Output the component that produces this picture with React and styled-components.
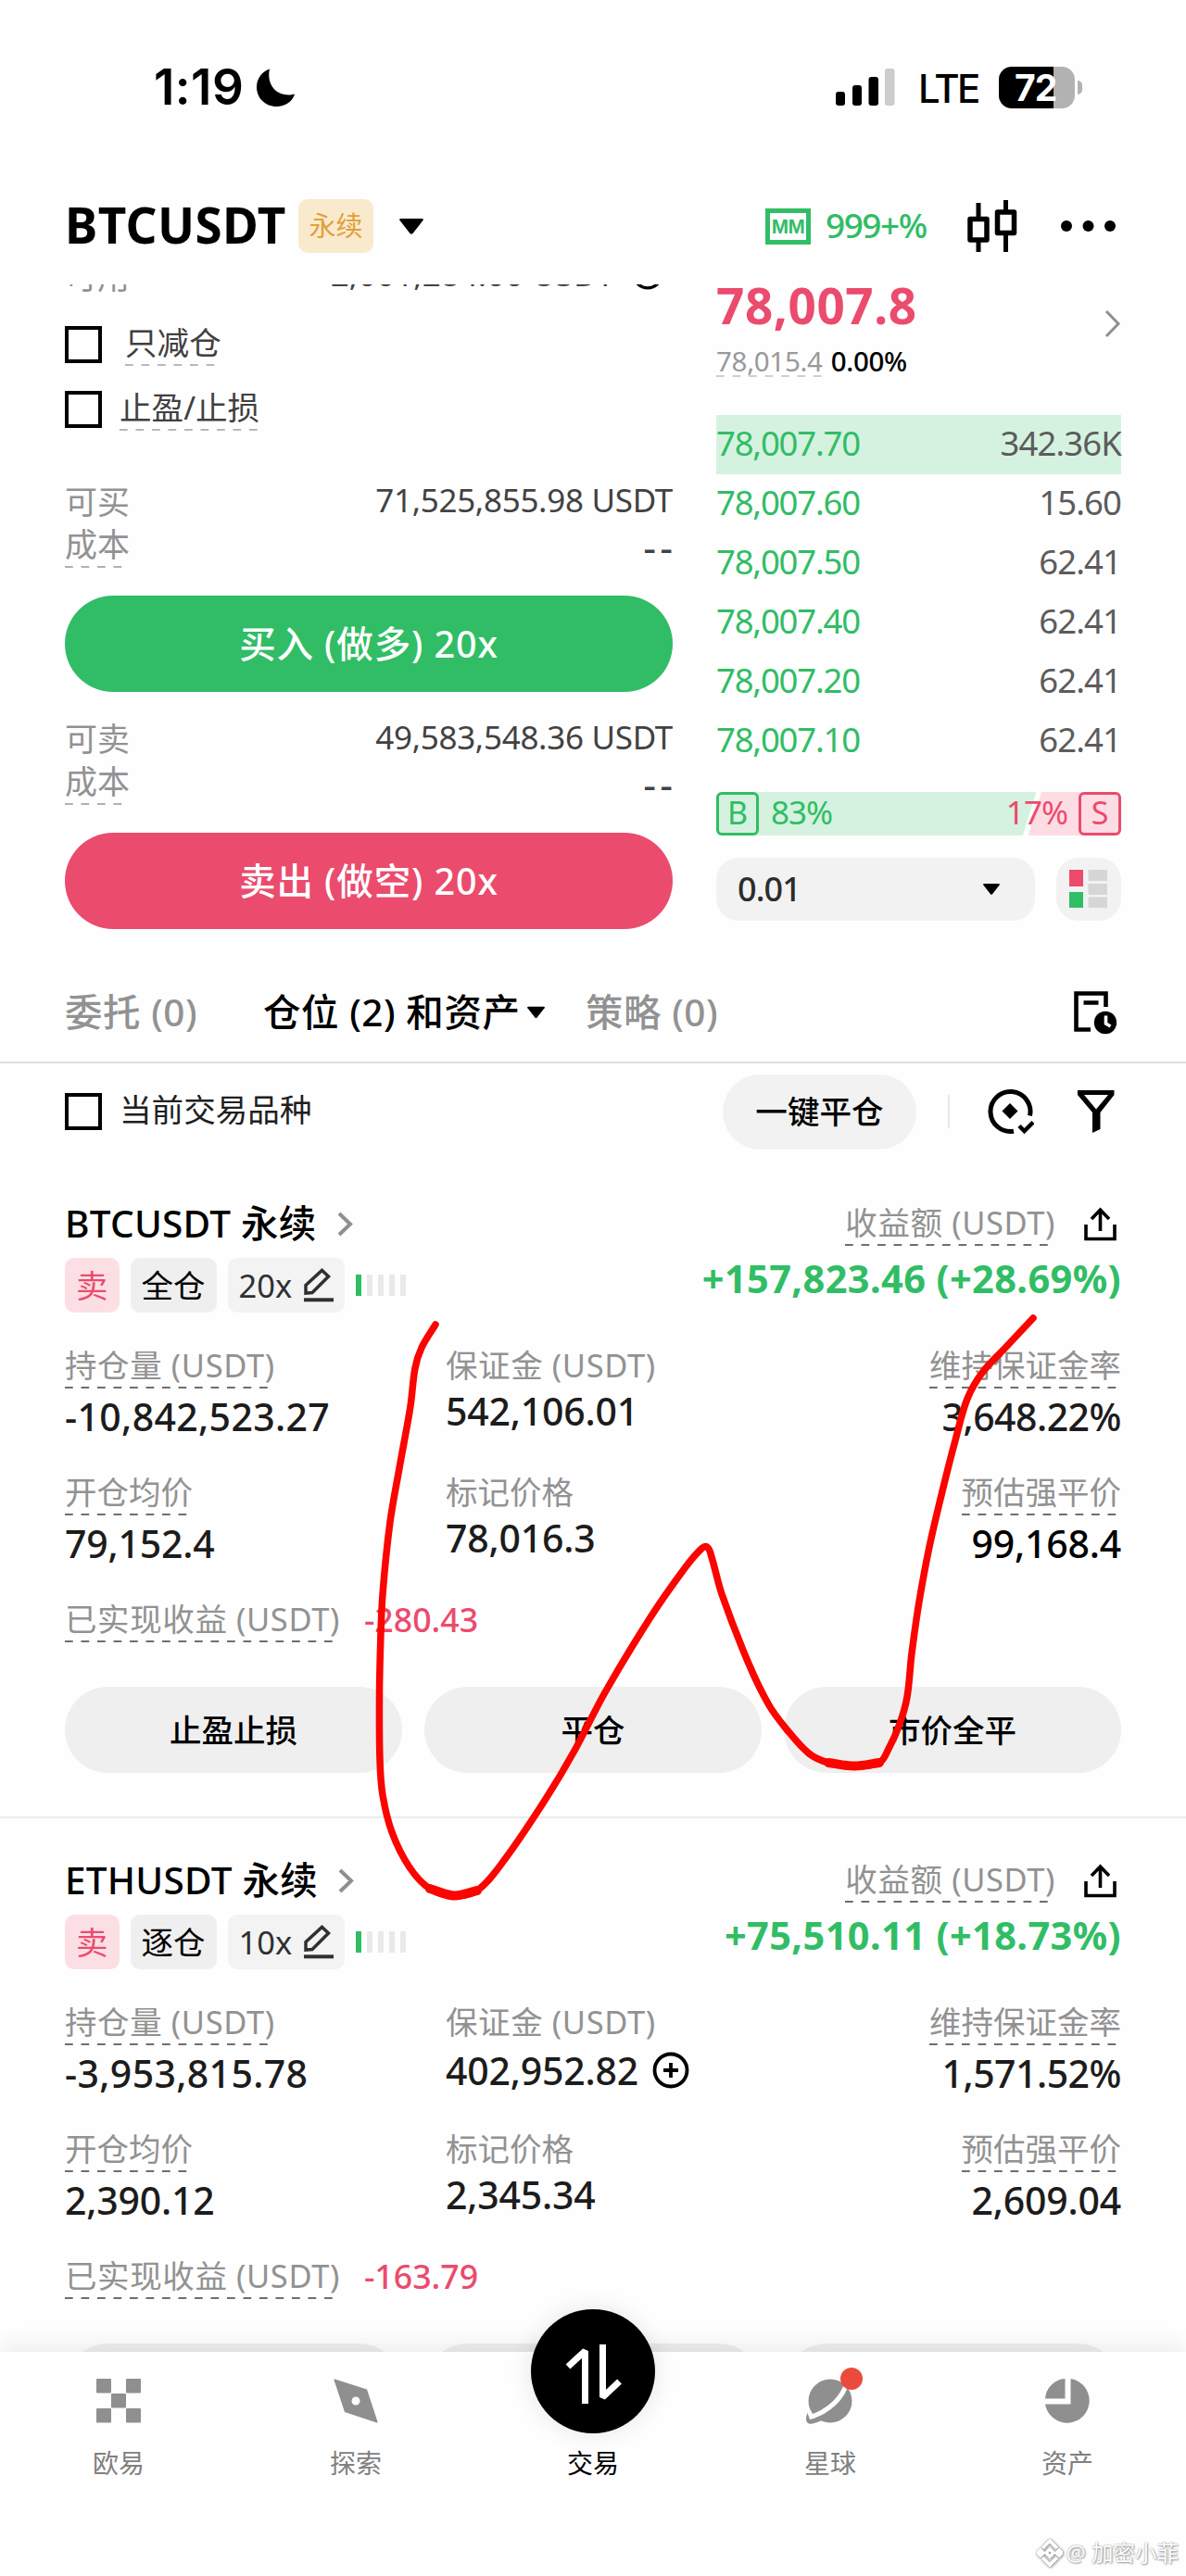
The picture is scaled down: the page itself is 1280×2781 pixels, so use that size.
import React from "react";
import styled, { createGlobalStyle, css } from "styled-components";

const GREEN = "#31bd65";
const RED = "#eb4b6d";
const GRAY = "#929292";
const SANS = '"Noto Sans", "Noto Sans CJK SC", sans-serif';
const SYSTEM = 'Inter, "Noto Sans CJK SC", sans-serif';

const Global = createGlobalStyle`
  *, *::before, *::after { box-sizing: border-box; }
  body { margin: 0; background: #fff; }
  svg { display: block; flex: none; }
  button { border: 0; margin: 0; padding: 0; font: inherit; color: inherit; }
`;

const Screen = styled.div`
  position: relative;
  width: 1280px;
  height: 2781px;
  overflow: hidden;
  display: flex;
  flex-direction: column;
  background: #fefefe;
  color: #000;
  font-family: ${SANS};
  white-space: nowrap;
`;

const dashes = (color) => css`
  background: linear-gradient(90deg, ${color} 9px, transparent 9px) left bottom / 17.5px 2px repeat-x;
`;

/* ---------- status bar ---------- */
const StatusBar = styled.header`
  height: 184px;
  flex: none;
  padding: 4px 112px 0 166px;
  display: flex;
  align-items: center;
  justify-content: space-between;
  font-family: ${SYSTEM};
`;
const Clock = styled.div`
  display: flex;
  align-items: center;
  gap: 14px;
  font-size: 53px;
  font-weight: 600;
  letter-spacing: 0.4px;
  line-height: 60px;
`;
const StatusRight = styled.div`
  display: flex;
  align-items: center;
`;
const Carrier = styled.span`
  margin: 4px 27px 0 25px;
  width: 60px;
  font-size: 42px;
  font-weight: 500;
  letter-spacing: -2.6px;
  line-height: 50px;
`;
const Battery = styled.div`
  width: 82px;
  height: 45px;
  border-radius: 14px;
  background: linear-gradient(90deg, #000 59px, #b2b2b2 59px);
  color: #fff;
  font-size: 39px;
  font-weight: 700;
  letter-spacing: -1px;
  line-height: 45px;
  padding-left: 17px;
`;
const BatteryNub = styled.div`
  width: 5px;
  height: 15px;
  margin-left: 3px;
  border-radius: 0 5px 5px 0;
  background: #b2b2b2;
`;

/* ---------- pair header ---------- */
const PairHeader = styled.div`
  height: 123px;
  flex: none;
  padding: 0 76px 3px 70px;
  display: flex;
  align-items: center;
`;
const Pair = styled.h1`
  margin: 0 11px 0 0;
  width: 241px;
  font-size: 53px;
  font-weight: 700;
  letter-spacing: 0.4px;
  line-height: 60px;
  padding-bottom: 3px;
`;
const ContractBadge = styled.span`
  width: 81px;
  height: 58px;
  border-radius: 10px;
  background: #faeacd;
  color: #e0a03b;
  font-size: 29px;
  line-height: 57px;
  text-align: center;
`;
const CaretSlot = styled.div`
  margin-left: 28px;
`;
const HeaderTools = styled.div`
  margin-left: auto;
  display: flex;
  align-items: center;
`;
const MarginBadge = styled.span`
  width: 49px;
  height: 39px;
  border: 5px solid ${GREEN};
  color: ${GREEN};
  font-family: "Liberation Sans", sans-serif;
  font-size: 22px;
  font-weight: 700;
  letter-spacing: -0.6px;
  line-height: 29px;
  text-align: center;
`;
const MarginText = styled.span`
  margin: 0 44px 0 16px;
  width: 109px;
  color: ${GREEN};
  font-size: 37px;
  font-weight: 500;
  letter-spacing: -1.5px;
  line-height: 44px;
  padding-bottom: 2px;
`;
const IconSlot = styled.div`
  margin-left: 47px;
`;

/* ---------- order form + book ---------- */
const TradeArea = styled.section`
  height: 733px;
  flex: none;
  overflow: hidden;
  padding: 0 70px;
  display: flex;
  justify-content: space-between;
`;
const OrderForm = styled.div`
  width: 656px;
  margin-top: -31px;
  display: flex;
  flex-direction: column;
`;
const FormRow = styled.div`
  height: ${(p) => p.$h || 46}px;
  margin-top: ${(p) => p.$top || 0}px;
  display: flex;
  justify-content: space-between;
  align-items: flex-start;
  font-size: 35px;
  line-height: 46px;
  color: ${GRAY};
`;
const FormLabel = styled.span`
  height: 48px;
  ${(p) => p.$dashed && dashes("#b0b0b0")}
`;
const FormValue = styled.span`
  color: #424242;
  letter-spacing: -0.3px;
  line-height: 42px;
`;
const EmptyValue = styled.span`
  margin-right: -4px;
  color: #424242;
  font-size: 43px;
  letter-spacing: 4px;
  line-height: 51px;
`;
const AvailableValue = styled.div`
  display: flex;
  align-items: center;
  gap: 19px;
  padding-right: 10px;
  line-height: 40px;
  color: #424242;
`;
const CheckRow = styled.label`
  height: 70px;
  display: flex;
  align-items: center;
`;
const Box = styled.span`
  width: 40px;
  height: 40px;
  border: 4px solid #000;
  flex: none;
`;
const CheckText = styled.span`
  margin-left: ${(p) => p.$gap || 19}px;
  height: 46px;
  font-size: 34.6px;
  line-height: 42px;
  color: ${(p) => p.$color || "#404040"};
  ${(p) => p.$dashed && dashes("#b8b8b8")}
`;
const OrderButton = styled.button`
  height: 104px;
  margin: 32px 0 ${(p) => (p.$last ? 0 : 28)}px;
  border-radius: 52px;
  background: ${(p) => p.$bg};
  color: #fff;
  font-size: 39.5px;
  font-weight: 500;
  letter-spacing: 0.9px;
  line-height: 104px;
`;

const Book = styled.div`
  width: 437px;
  display: flex;
  flex-direction: column;
`;
const LastPrice = styled.div`
  height: 141px;
  display: flex;
  justify-content: space-between;
  align-items: flex-start;
`;
const Price = styled.div`
  font-size: 53px;
  font-weight: 700;
  letter-spacing: 0.6px;
  line-height: 45px;
  color: ${RED};
`;
const IndexLine = styled.div`
  margin-top: 21px;
  display: flex;
  gap: 9px;
  font-size: 29.5px;
  line-height: 34px;
  letter-spacing: -0.3px;
  font-weight: 500;
`;
const IndexPrice = styled.span`
  color: #999;
  font-weight: 400;
  ${dashes("#cfcfcf")}
`;
const ChevronSlot = styled.div`
  margin-top: 27px;
`;
const BookRow = styled.div`
  height: 64px;
  padding-bottom: 3px;
  display: flex;
  justify-content: space-between;
  font-size: 36.5px;
  line-height: 61px;
  letter-spacing: -0.9px;
  color: #5c5c5c;
  background: ${(p) => (p.$fill ? "#d5f2e0" : "none")};
`;
const BookPrice = styled.span`
  color: ${GREEN};
  letter-spacing: -1.2px;
`;
const Ratio = styled.div`
  height: 47px;
  margin: 23px 0 24px;
  display: flex;
  align-items: center;
  font-size: 35px;
  line-height: 42px;
  background: linear-gradient(
    107deg,
    #d5f2e0 330px,
    #fefefe 330.5px,
    #fefefe 335.5px,
    #fddde3 336px
  );
  border-radius: 6px;
`;
const SideBox = styled.span`
  width: 46px;
  height: 47px;
  border: 3px solid ${(p) => p.$c};
  border-radius: 6px;
  color: ${(p) => p.$c};
  font-size: 34px;
  line-height: 39px;
  text-align: center;
`;
const Percent = styled.span`
  color: ${(p) => p.$c};
  letter-spacing: -1px;
  margin: ${(p) => (p.$right ? "0 12px 0 auto" : "0 0 0 13px")};
  padding-bottom: 3px;
`;
const BookTools = styled.div`
  display: flex;
  justify-content: space-between;
`;
const Precision = styled.div`
  width: 344px;
  height: 68px;
  border-radius: 24px;
  padding: 0 38px 0 23px;
  display: flex;
  align-items: center;
  justify-content: space-between;
  background: #f2f2f2;
  font-size: 36px;
  font-weight: 500;
  letter-spacing: -0.9px;
  line-height: 60px;
  color: #2c2c2c;
`;
const LayoutButton = styled.div`
  width: 70px;
  height: 68px;
  border-radius: 24px;
  background: #f2f2f2;
  display: flex;
  align-items: center;
  justify-content: center;
`;

/* ---------- tabs ---------- */
const Tabs = styled.nav`
  height: 108px;
  flex: none;
  padding: 0 75px 0 70px;
  border-bottom: 2px solid #dedede;
  display: flex;
  align-items: center;
  font-size: 40.5px;
  font-weight: 500;
  letter-spacing: 0.55px;
  line-height: 50px;
`;
const Tab = styled.div`
  width: ${(p) => p.$w}px;
  display: flex;
  align-items: center;
  justify-content: space-between;
  color: ${(p) => (p.$active ? "#000" : GRAY)};
  margin-right: ${(p) => p.$gap || 0}px;
`;
const Push = styled.div`
  margin-left: auto;
`;
const Filters = styled.div`
  height: 104px;
  flex: none;
  padding: 0 77px 0 70px;
  display: flex;
  align-items: center;
`;
const CloseAll = styled.button`
  width: 209px;
  height: 81px;
  margin-left: auto;
  border-radius: 41px;
  background: #f2f2f2;
  font-size: 34.6px;
  font-weight: 500;
  line-height: 76px;
`;
const Rule = styled.div`
  width: 2px;
  height: 36px;
  margin: 0 41px 0 34px;
  background: #e8e8e8;
`;

/* ---------- position card ---------- */
const Card = styled.article`
  height: 709px;
  flex: none;
  padding: 44px 70px 0;
  border-top: 2px solid ${(p) => (p.$divided ? "#ebebeb" : "transparent")};
`;
const CardHead = styled.div`
  height: 153px;
  display: flex;
  justify-content: space-between;
`;
const HeadSide = styled.div`
  display: flex;
  flex-direction: column;
  align-items: ${(p) => (p.$end ? "flex-end" : "flex-start")};
`;
const Title = styled.h2`
  margin: 0;
  display: flex;
  align-items: center;
  gap: 22px;
  font-size: 40.5px;
  font-weight: 500;
  letter-spacing: 0.25px;
  line-height: 46px;
`;
const Tags = styled.div`
  margin-top: 14px;
  height: 59px;
  display: flex;
  align-items: center;
`;
const Tag = styled.span`
  height: 59px;
  margin-right: 12px;
  padding: 0 12px;
  border-radius: 10px;
  background: ${(p) => p.$bg || "#efefef"};
  color: ${(p) => p.$c || "#000"};
  display: flex;
  align-items: center;
  gap: 13px;
  font-size: 34.5px;
  line-height: 55px;
`;
const Levels = styled.div`
  display: flex;
  gap: 6px;
`;
const Level = styled.i`
  width: 6px;
  height: 23px;
  background: ${(p) => (p.$on ? GREEN : "#e9e9e9")};
`;
const PnlLabelRow = styled.div`
  display: flex;
  align-items: flex-end;
  gap: 31px;
  padding-right: 5px;
  height: 47px;
`;
const ShareSlot = styled.div`
  padding-bottom: 5px;
`;
const Pnl = styled.div`
  margin-top: 12px;
  font-size: 41.5px;
  font-weight: 700;
  letter-spacing: 0.4px;
  line-height: 46px;
  color: ${GREEN};
`;
const Caption = styled.span`
  height: ${(p) => (p.$dashed ? 48 : 46)}px;
  font-size: 34.5px;
  line-height: 46px;
  letter-spacing: ${(p) => (p.$unit ? 0.6 : 0)}px;
  color: ${GRAY};
  ${(p) => p.$dashed && dashes("#6e6e6e")}
`;
const Grid = styled.div`
  display: grid;
  grid-template-columns: 411px 1fr 300px;
  row-gap: 35px;
`;
const Metric = styled.div`
  height: 102px;
  display: flex;
  flex-direction: column;
  align-items: ${(p) => (p.$end ? "flex-end" : "flex-start")};
  gap: ${(p) => p.$gap || 7}px;
`;
const Value = styled.span`
  display: flex;
  align-items: center;
  gap: 15px;
  font-size: 41px;
  font-weight: 500;
  letter-spacing: ${(p) => (p.$ls === undefined ? -0.2 : p.$ls)}px;
  line-height: 46px;
  color: ${(p) => p.$c || "#1c1c1c"};
`;
const Realized = styled.div`
  margin: 35px 0 48px;
  display: flex;
  gap: 26px;
  font-size: 35.7px;
  font-weight: 500;
  line-height: 46px;
  color: ${RED};
  ${Caption} { font-weight: 400; }
`;
const Actions = styled.div`
  display: grid;
  grid-template-columns: repeat(3, 1fr);
  gap: 24px;
`;
const Action = styled.button`
  height: 93px;
  border-radius: 47px;
  background: #efefef;
  font-size: 34.5px;
  font-weight: 500;
  line-height: 91px;
`;

/* ---------- bottom navigation ---------- */
const BottomNav = styled.nav`
  position: absolute;
  left: 0;
  right: 0;
  bottom: 0;
  height: 242px;
  display: grid;
  grid-template-columns: repeat(5, 1fr);
  background: #fefefe;
  box-shadow: 0 -4px 26px rgba(0, 0, 0, 0.09);
`;
const NavItem = styled.div`
  position: relative;
  display: flex;
  flex-direction: column;
  align-items: center;
  gap: 26px;
  padding-top: ${(p) => (p.$center ? 103 : 29)}px;
  font-size: 28px;
  line-height: 34px;
  color: ${(p) => (p.$center ? "#000" : "#808080")};
`;
const TradeFab = styled.div`
  position: absolute;
  top: -46px;
  width: 134px;
  height: 134px;
  border-radius: 50%;
  background: #000;
  box-shadow: 0 0 26px rgba(0, 0, 0, 0.1);
`;
const Dot = styled.i`
  position: absolute;
  left: 139px;
  top: 17px;
  width: 24px;
  height: 24px;
  border-radius: 50%;
  background: #eb4b3c;
`;
const Scribble = styled.svg`
  position: absolute;
  left: 0;
  top: 1400px;
`;
const Watermark = styled.div`
  position: absolute;
  right: 8px;
  bottom: 8px;
  display: flex;
  align-items: center;
  gap: 4px;
  font-size: 23.5px;
  line-height: 34px;
  color: #fff;
  text-shadow: 0 0 2px #8c8c8c, 1px 1px 2px #a0a0a0;
  svg { filter: drop-shadow(0 0 1px #8c8c8c) drop-shadow(1px 1px 1px #b0b0b0); }
`;

/* ---------- drawings ---------- */
const Caret = ({ w, h }) => (
  <svg width={w} height={h} viewBox="0 0 26 17">
    <path d="M1.5 0h23q2 0 1 2L14.5 16q-1.500 1.500-3 0L.5 2Q-.5 0 1.500 0z" fill="#000" />
  </svg>
);
const Chevron = ({ w, h, sw }) => (
  <svg width={w} height={h} viewBox={`0 0 ${w} ${h}`} fill="none" stroke="#8f8f8f" strokeWidth={sw}>
    <path d={`M2 2L${w - 3} ${h / 2}L2 ${h - 2}`} />
  </svg>
);
const PlusCircle = ({ size }) => (
  <svg width={size} height={size} viewBox="0 0 40 40" fill="none" stroke="#000" strokeWidth="3.800">
    <circle cx="20" cy="20" r="17.500" />
    <path d="M20 12v16M12 20h16" />
  </svg>
);
const MoonIcon = () => (
  <svg width="41" height="41" viewBox="0 0 41 41">
    <path d="M14 0.500C11 13 17 29 36 28.500c2.500 0 4.500-1 5-.5C38 36 30.500 41 21.500 41 9.500 41 0 32 0 20 0 11 5.500 3.500 14 .5z" />
  </svg>
);
const SignalIcon = () => (
  <svg width="64" height="40" viewBox="0 0 64 40">
    <rect x="0" y="25" width="10" height="15" rx="3" />
    <rect x="18" y="18" width="10" height="22" rx="3" />
    <rect x="35.500" y="9" width="10.500" height="31" rx="3" />
    <rect x="53" y="0" width="10.500" height="40" rx="3" fill="#ccc" />
  </svg>
);
const CandlesIcon = () => (
  <svg width="54" height="56" viewBox="0 0 54 56">
    <path d="M9.500 3h5v15h-5zM9.500 44h5v12h-5zM39 0h5v12h-5zM39 37h5v19h-5z" />
    <path d="M3 20.500h18v22.500H3zM32.500 13h18v22.500h-18z" fill="none" stroke="#000" strokeWidth="5.500" strokeLinejoin="round" />
  </svg>
);
const MoreIcon = () => (
  <svg width="59" height="12" viewBox="0 0 59 12">
    <circle cx="6" cy="6" r="6" />
    <circle cx="29.500" cy="6" r="6" />
    <circle cx="53" cy="6" r="6" />
  </svg>
);
const BookLayoutIcon = () => (
  <svg width="42" height="42" viewBox="0 0 42 42">
    <path d="M0 0h15v18H0z" fill={RED} />
    <path d="M0 24h15v17H0z" fill={GREEN} />
    <path d="M20.500 0H41v12H20.500zM20.500 15H41v12H20.500zM20.500 29.500H41v11.500H20.500z" fill="#d6d6d6" />
  </svg>
);
const HistoryIcon = () => (
  <svg width="46" height="47" viewBox="0 0 46 47">
    <path d="M34.500 17V2.500H2.500V41.500H18M10.500 12.500h16" fill="none" stroke="#000" strokeWidth="4.600" />
    <circle cx="34" cy="34" r="12.200" />
    <path d="M34.500 26.500v8.500l5 3" fill="none" stroke="#fff" strokeWidth="3.600" />
  </svg>
);
const TargetIcon = () => (
  <svg width="50" height="50" viewBox="0 0 50 50" fill="none" stroke="#000" strokeWidth="5">
    <path d="M45.500 29.500A21.500 21.500 0 1 0 28 46.200" />
    <path d="M24 16l8.500 8.500L24 33l-8.500-8.500z" fill="#000" stroke="none" />
    <path d="M34 40.500l5.500 5.500 9.500-9.500" strokeWidth="4.500" />
  </svg>
);
const FunnelIcon = () => (
  <svg width="40" height="46" viewBox="0 0 40 46">
    <path d="M0 0h39.500v5L24.500 24v18L16 46V24L0 5zM7 5l13 15.500L33 5z" fillRule="evenodd" />
  </svg>
);
const ShareIcon = () => (
  <svg width="35" height="37" viewBox="0 0 35 37" fill="none" stroke="#000" strokeWidth="3.600">
    <path d="M2 19v15.500h31V19M17.500 26V3M8 13l9.500-10L27 13" />
  </svg>
);
const PencilIcon = () => (
  <svg width="32" height="37" viewBox="0 0 32 37" fill="none" stroke="#303030" strokeWidth="3.500">
    <path d="M2 27v-8.500L19.500 2.500l7 6.500L9 26.500z" />
    <path d="M0 34.300h32" strokeWidth="4" />
  </svg>
);
const OkxIcon = () => (
  <svg width="48" height="48" viewBox="0 0 48 48" fill="#8f8f8f">
    {[[0, 0], [32, 0], [16, 16], [0, 32], [32, 32]].map(([x, y]) => (
      <rect key={`${x}-${y}`} x={x} y={y} width="16" height="15.500" rx="1" />
    ))}
  </svg>
);
const CompassIcon = () => (
  <svg width="48" height="48" viewBox="0 0 48 48">
    <path d="M.5 1.500Q0 0 1.500.5L36 11.500 47.500 46.500Q48 48 46.500 47.500L12 36z" fill="#8f8f8f" />
    <circle cx="24" cy="24" r="4.500" fill="#fefefe" />
  </svg>
);
const PlanetIcon = () => (
  <svg width="52" height="48" viewBox="0 0 52 48" overflow="visible">
    <circle cx="26" cy="24" r="23.500" fill="#8f8f8f" />
    <path d="M44 4C40 19 27 35 1 43" fill="none" stroke="#fefefe" strokeWidth="5" />
    <path d="M1.500 37C-1.500 44 0 50 7 48.500Q16 46 22 42L14 40.500Q8 43.500 4 44z" fill="#8f8f8f" />
  </svg>
);
const PieIcon = () => (
  <svg width="48" height="48" viewBox="0 0 48 48" fill="#8f8f8f">
    <path d="M21.500 0v21.500H0A23 23 0 0 1 21.500 0z" />
    <path d="M27.500 0A24 24 0 1 1 0 27.500h27.500z" />
  </svg>
);
const SwapArrows = () => (
  <svg width="134" height="134" viewBox="0 0 134 134" fill="none" stroke="#fff" strokeWidth="7" strokeLinejoin="bevel">
    <path d="M58.500 102V45L40 62" />
    <path d="M77.500 38v57l18-17" />
  </svg>
);
const BinanceIcon = () => (
  <svg width="28" height="30" viewBox="0 0 28 30" fill="none" stroke="#fff" strokeWidth="3.500">
    <path d="M6 10l8-8 8 8M6 20l8 8 8-8M1 15l3-3 3 3-3 3zM21 15l3-3 3 3-3 3zM10 15l4-4 4 4-4 4z" />
  </svg>
);

/* hand-drawn stroke: a smooth curve through its points */
const strokePoints = [
  [470, 1430], [455, 1455], [448, 1477], [443, 1518], [431, 1585], [421, 1643], [413, 1721], [410.500, 1780],
  [409.500, 1829], [410, 1900], [413, 1938], [423, 1978], [442, 2016], [464, 2039], [490, 2046.500],
  [515, 2041], [545, 2007], [589, 1942], [620, 1890], [653, 1827], [702, 1746], [739, 1693], [756, 1673],
  [763, 1670], [768, 1681], [779, 1721], [808, 1796], [830, 1841], [849, 1867], [873, 1893], [894, 1903],
  [922, 1906.500], [949, 1903], [959, 1888], [971, 1861], [979, 1832], [984, 1785], [992, 1729],
  [1003, 1670], [1016, 1614], [1031, 1555], [1044, 1510], [1060, 1482], [1085, 1455], [1115, 1423],
];
const smooth = (pts) =>
  pts.slice(0, -1).reduce((d, p1, i) => {
    const p0 = pts[i - 1] || p1;
    const p2 = pts[i + 1];
    const p3 = pts[i + 2] || p2;
    const span = Math.hypot(p2[0] - p1[0], p2[1] - p1[1]);
    const handle = (a, b, sign, at) => {
      const len = Math.hypot(b[0] - a[0], b[1] - a[1]) || 1;
      const k = (span / 3 / len) * sign;
      return `${(at[0] + (b[0] - a[0]) * k).toFixed(1)} ${(at[1] + (b[1] - a[1]) * k).toFixed(1)}`;
    };
    return `${d}C${handle(p0, p2, 1, p1)} ${handle(p1, p3, -1, p2)} ${p2[0]} ${p2[1]}`;
  }, `M${pts[0][0]} ${pts[0][1]}`);

/* ---------- data ---------- */
const bids = [
  ["78,007.70", "342.36K"],
  ["78,007.60", "15.60"],
  ["78,007.50", "62.41"],
  ["78,007.40", "62.41"],
  ["78,007.20", "62.41"],
  ["78,007.10", "62.41"],
];
const positions = [
  {
    name: "BTCUSDT 永续", mode: "全仓", leverage: "20x", pnl: "+157,823.46 (+28.69%)",
    size: "-10,842,523.27", margin: "542,106.01", ratio: "3,648.22%",
    entry: "79,152.4", mark: "78,016.3", liq: "99,168.4", realized: "-280.43", liqColor: "#000",
  },
  {
    name: "ETHUSDT 永续", mode: "逐仓", leverage: "10x", pnl: "+75,510.11 (+18.73%)",
    size: "-3,953,815.78", margin: "402,952.82", ratio: "1,571.52%", canAdd: true,
    entry: "2,390.12", mark: "2,345.34", liq: "2,609.04", realized: "-163.79",
  },
];

const Position = ({ p, divided }) => (
  <Card $divided={divided}>
    <CardHead>
      <HeadSide>
        <Title>{p.name}<Chevron w={17} h={27} sw={4} /></Title>
        <Tags>
          <Tag $bg="#fcdfe5" $c={RED}>卖</Tag>
          <Tag>{p.mode}</Tag>
          <Tag $bg="#f3f3f3" $c="#303030">{p.leverage}<PencilIcon /></Tag>
          <Levels>{[1, 0, 0, 0, 0].map((on, i) => <Level key={i} $on={on} />)}</Levels>
        </Tags>
      </HeadSide>
      <HeadSide $end>
        <PnlLabelRow>
          <Caption $dashed $unit>收益额 (USDT)</Caption>
          <ShareSlot><ShareIcon /></ShareSlot>
        </PnlLabelRow>
        <Pnl>{p.pnl}</Pnl>
      </HeadSide>
    </CardHead>
    <Grid>
      <Metric><Caption $dashed $unit>持仓量 (USDT)</Caption><Value $ls={0.35}>{p.size}</Value></Metric>
      <Metric $gap={p.canAdd ? 6 : 3}>
        <Caption $unit>保证金 (USDT)</Caption>
        <Value>{p.margin}{p.canAdd && <PlusCircle size={40} />}</Value>
      </Metric>
      <Metric $end><Caption $dashed>维持保证金率</Caption><Value $ls={-0.5}>{p.ratio}</Value></Metric>
      <Metric><Caption $dashed>开仓均价</Caption><Value>{p.entry}</Value></Metric>
      <Metric $gap={3}><Caption>标记价格</Caption><Value>{p.mark}</Value></Metric>
      <Metric $end><Caption $dashed>预估强平价</Caption><Value $c={p.liqColor}>{p.liq}</Value></Metric>
    </Grid>
    <Realized><Caption $dashed $unit>已实现收益 (USDT)</Caption>{p.realized}</Realized>
    <Actions>
      <Action>止盈止损</Action>
      <Action>平仓</Action>
      <Action>市价全平</Action>
    </Actions>
  </Card>
);

export default function App() {
  return (
    <>
      <Global />
      <Screen>
        <StatusBar>
          <Clock>1:19<MoonIcon /></Clock>
          <StatusRight>
            <SignalIcon />
            <Carrier>LTE</Carrier>
            <Battery>72</Battery>
            <BatteryNub />
          </StatusRight>
        </StatusBar>

        <PairHeader>
          <Pair>BTCUSDT</Pair>
          <ContractBadge>永续</ContractBadge>
          <CaretSlot><Caret w={26} h={17} /></CaretSlot>
          <HeaderTools>
            <MarginBadge>MM</MarginBadge>
            <MarginText>999+%</MarginText>
            <CandlesIcon />
            <IconSlot><MoreIcon /></IconSlot>
          </HeaderTools>
        </PairHeader>

        <TradeArea>
          <OrderForm>
            <FormRow $h={61}>
              <FormLabel>可用</FormLabel>
              <AvailableValue>2,001,284.00 USDT<PlusCircle size={34} /></AvailableValue>
            </FormRow>
            <CheckRow><Box /><CheckText $gap={25} $dashed>只减仓</CheckText></CheckRow>
            <CheckRow><Box /><CheckText $dashed>止盈/止损</CheckText></CheckRow>
            <FormRow $top={42}><FormLabel>可买</FormLabel><FormValue>71,525,855.98 USDT</FormValue></FormRow>
            <FormRow><FormLabel $dashed>成本</FormLabel><EmptyValue>--</EmptyValue></FormRow>
            <OrderButton $bg={GREEN}>买入 (做多) 20x</OrderButton>
            <FormRow><FormLabel>可卖</FormLabel><FormValue>49,583,548.36 USDT</FormValue></FormRow>
            <FormRow><FormLabel $dashed>成本</FormLabel><EmptyValue>--</EmptyValue></FormRow>
            <OrderButton $bg={RED} $last>卖出 (做空) 20x</OrderButton>
          </OrderForm>
          <Book>
            <LastPrice>
              <div>
                <Price>78,007.8</Price>
                <IndexLine><IndexPrice>78,015.4</IndexPrice>0.00%</IndexLine>
              </div>
              <ChevronSlot><Chevron w={18} h={31} sw={3} /></ChevronSlot>
            </LastPrice>
            {bids.map(([price, amount], i) => (
              <BookRow key={price} $fill={i === 0}><BookPrice>{price}</BookPrice>{amount}</BookRow>
            ))}
            <Ratio>
              <SideBox $c={GREEN}>B</SideBox>
              <Percent $c={GREEN}>83%</Percent>
              <Percent $c={RED} $right>17%</Percent>
              <SideBox $c={RED}>S</SideBox>
            </Ratio>
            <BookTools>
              <Precision>0.01<Caret w={18} h={12} /></Precision>
              <LayoutButton><BookLayoutIcon /></LayoutButton>
            </BookTools>
          </Book>
        </TradeArea>

        <Tabs>
          <Tab $w={142} $gap={72}>委托 (0)</Tab>
          <Tab $w={304} $gap={44} $active>仓位 (2) 和资产<Caret w={19} h={14} /></Tab>
          <Tab $w={142}>策略 (0)</Tab>
          <Push><HistoryIcon /></Push>
        </Tabs>
        <Filters>
          <Box />
          <CheckText $color="#202020">当前交易品种</CheckText>
          <CloseAll>一键平仓</CloseAll>
          <Rule />
          <TargetIcon />
          <IconSlot><FunnelIcon /></IconSlot>
        </Filters>

        {positions.map((p, i) => <Position key={p.name} p={p} divided={i > 0} />)}

        <Scribble width="1280" height="680" viewBox="0 1400 1280 680" fill="none" stroke="#fa0500" strokeWidth="7.500" strokeLinecap="round" strokeLinejoin="round">
          <path d={smooth(strokePoints)} />
          <path d={`${smooth(strokePoints.slice(13, 16))}${smooth(strokePoints.slice(30, 33))}`} strokeWidth="10" />
        </Scribble>

        <BottomNav>
          <NavItem><OkxIcon />欧易</NavItem>
          <NavItem><CompassIcon />探索</NavItem>
          <NavItem $center><TradeFab><SwapArrows /></TradeFab>交易</NavItem>
          <NavItem><PlanetIcon /><Dot />星球</NavItem>
          <NavItem><PieIcon />资产</NavItem>
        </BottomNav>
        <Watermark><BinanceIcon />@ 加密小菲</Watermark>
      </Screen>
    </>
  );
}
